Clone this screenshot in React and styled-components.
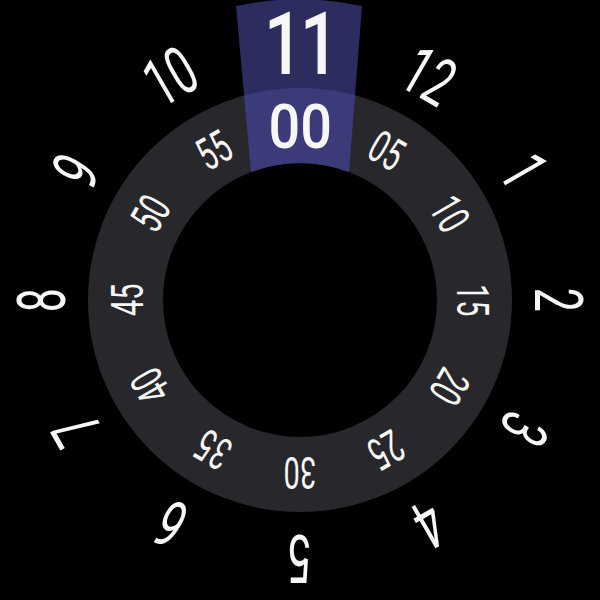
import styled, { createGlobalStyle } from "styled-components";

const CX = 300;
const CY = 300;
const RING_OUTER = 212;
const RING_INNER = 137;

const hours = Array.from({ length: 12 }, (_, k) => ((10 + k) % 12) + 1);
const minutes = Array.from({ length: 12 }, (_, k) => String(k * 5).padStart(2, "0"));

const GlobalStyle = createGlobalStyle`
    html, body {
        margin: 0;
        padding: 0;
        background: #000;
    }
`;

// every layer sits in the same grid cell, so it is all centred on the dial
const Face = styled.div`
    display: grid;
    place-items: center;
    width: 600px;
    height: 600px;
    overflow: hidden;
    background: #000;
    color: #f7f7f7;
    font-family: Roboto, "Liberation Sans", sans-serif;

    & > * {
        grid-area: 1 / 1;
    }
`;

const Ring = styled.div`
    width: ${RING_OUTER * 2}px;
    height: ${RING_OUTER * 2}px;
    box-sizing: border-box;
    border-radius: 50%;
    border: ${RING_OUTER - RING_INNER}px solid #28272c;
`;

const Highlight = styled.svg`
    display: block;
`;

const Spoke = styled.div`
    display: flex;
    align-items: center;
    justify-content: center;
    width: 0;
    height: 0;
    transform: rotate(${(p) => p.$angle}deg) translateY(-${(p) => p.$radius}px);
`;

const Label = styled.span`
    flex: none;
    line-height: 1;
    white-space: nowrap;
    font-size: ${(p) => p.$size}px;
    font-weight: ${(p) => p.$weight};
    letter-spacing: ${(p) => p.$tracking || 0}px;
    transform: scaleX(${(p) => p.$squeeze});
`;

const Selector = () => (
    <Highlight width="600" height="600" viewBox="0 0 600 600">
        <defs>
            <clipPath id="slot">
                <path d="M236 6 A300 300 0 0 1 362 6 L349 172 A137 137 0 0 0 251 172 Z" />
            </clipPath>
        </defs>
        <g clipPath="url(#slot)">
            <rect x="0" y="0" width="600" height="600" fill="#2c2d5e" />
            <circle cx={CX} cy={CY} r={RING_OUTER} fill="#3a3b78" />
        </g>
    </Highlight>
);

const App = () => {
    return (
        <>
            <GlobalStyle />
            <Face>
                <Ring />
                <Selector />
                {hours.map((h, k) => (
                    <Spoke key={"h" + h} $angle={k * 30} $radius={k === 0 ? 256 : 258}>
                        {k === 0 ? (
                            <Label $size={88} $weight={500} $squeeze={0.78} $tracking={-4}>
                                {h}
                            </Label>
                        ) : (
                            <Label $size={67} $weight={400} $squeeze={0.64}>
                                {h}
                            </Label>
                        )}
                    </Spoke>
                ))}
                {minutes.map((m, k) => (
                    <Spoke key={"m" + m} $angle={k * 30} $radius={173}>
                        {k === 0 ? (
                            <Label $size={62} $weight={500} $squeeze={0.9}>
                                {m}
                            </Label>
                        ) : (
                            <Label $size={45} $weight={400} $squeeze={0.64}>
                                {m}
                            </Label>
                        )}
                    </Spoke>
                ))}
            </Face>
        </>
    );
};

export default App;
